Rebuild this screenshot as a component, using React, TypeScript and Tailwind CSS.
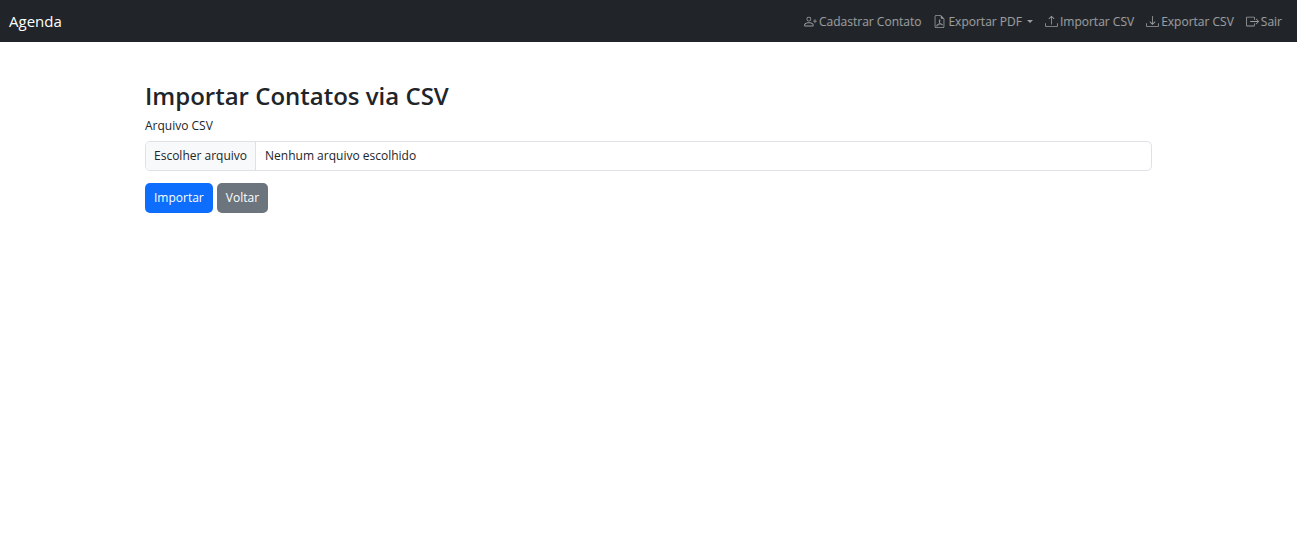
import { useState } from "react";
import type { ChangeEvent, ReactNode } from "react";
import { BsBoxArrowRight, BsDownload, BsFileEarmarkPdf, BsPersonPlus, BsUpload } from "react-icons/bs";

function NavLink({ icon, children }: { icon: ReactNode; children: ReactNode }) {
  return (
    <a href="#" className="flex items-center gap-[2px] text-white/55 hover:text-white/75">
      {icon}
      <span>{children}</span>
    </a>
  );
}

export default function App() {
  const [fileName, setFileName] = useState("");

  const handleFile = (event: ChangeEvent<HTMLInputElement>) => {
    setFileName(event.target.files?.[0]?.name ?? "");
  };

  return (
    <div className="min-h-screen bg-white font-['Open_Sans',sans-serif] text-[12px] leading-5 text-[#212529]">
      <nav className="flex flex-wrap items-center justify-between bg-[#212529] py-[9px] pr-[15px] pl-[9px]">
        <a href="#" className="text-[15px] leading-6 text-white">
          Agenda
        </a>
        <div className="flex flex-wrap items-center gap-3 leading-[21px]">
          <NavLink icon={<BsPersonPlus className="size-[13px]" />}>Cadastrar Contato</NavLink>
          <button type="button" className="flex items-center gap-[2px] text-white/55 hover:text-white/75">
            <BsFileEarmarkPdf className="size-[13px]" />
            <span>Exportar PDF</span>
            <span className="ml-[3px] border-x-[3px] border-t-[3px] border-x-transparent border-t-current" />
          </button>
          <NavLink icon={<BsUpload className="size-[13px]" />}>Importar CSV</NavLink>
          <NavLink icon={<BsDownload className="size-[13px]" />}>Exportar CSV</NavLink>
          <NavLink icon={<BsBoxArrowRight className="size-[13px]" />}>Sair</NavLink>
        </div>
      </nav>

      <main className="mx-auto max-w-[1025px] px-[9px] pt-[39px]">
        <h2 className="mb-[5px] text-[24px] leading-[30px] font-semibold">Importar Contatos via CSV</h2>
        <form onSubmit={(event) => event.preventDefault()}>
          <label htmlFor="arquivo" className="mb-[5px] block w-fit">
            Arquivo CSV
          </label>
          <div className="relative mb-3 flex overflow-hidden rounded-[5px] border border-[#dee2e6] focus-within:border-[#86b7fe]">
            <span className="border-r border-[#dee2e6] bg-[#f8f9fa] px-2 py-1">Escolher arquivo</span>
            <span className="px-[9px] py-1">{fileName || "Nenhum arquivo escolhido"}</span>
            <input
              id="arquivo"
              type="file"
              accept=".csv"
              onChange={handleFile}
              className="absolute inset-0 size-full cursor-pointer opacity-0"
            />
          </div>
          <div className="flex gap-1">
            <button type="submit" className="rounded-[5px] bg-[#0d6efd] px-[9px] py-[5px] text-white hover:bg-[#0b5ed7]">
              Importar
            </button>
            <a href="#" className="rounded-[5px] bg-[#6c757d] px-[9px] py-[5px] text-white hover:bg-[#5c636a]">
              Voltar
            </a>
          </div>
        </form>
      </main>
    </div>
  );
}
